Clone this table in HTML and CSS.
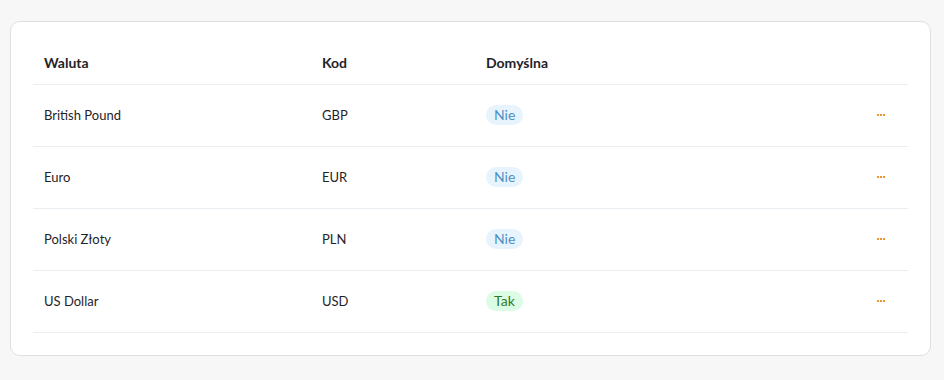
FILE: index.html
```html
<!DOCTYPE html>
<html lang="pl">
<head>
<meta charset="utf-8">
<link rel="stylesheet" href="styles.css">
</head>
<body>
<div class="card">
  <div class="table">
    <div class="row head">
      <div class="cell">Waluta</div>
      <div class="cell">Kod</div>
      <div class="cell">Domyślna</div>
      <div class="cell"></div>
    </div>
    <div class="row">
      <div class="cell">British Pound</div>
      <div class="cell">GBP</div>
      <div class="cell"><span class="pill no">Nie</span></div>
      <div class="cell act"><span class="dots"><i></i><i></i><i></i></span></div>
    </div>
    <div class="row">
      <div class="cell">Euro</div>
      <div class="cell">EUR</div>
      <div class="cell"><span class="pill no">Nie</span></div>
      <div class="cell act"><span class="dots"><i></i><i></i><i></i></span></div>
    </div>
    <div class="row">
      <div class="cell">Polski Złoty</div>
      <div class="cell">PLN</div>
      <div class="cell"><span class="pill no">Nie</span></div>
      <div class="cell act"><span class="dots"><i></i><i></i><i></i></span></div>
    </div>
    <div class="row">
      <div class="cell">US Dollar</div>
      <div class="cell">USD</div>
      <div class="cell"><span class="pill yes">Tak</span></div>
      <div class="cell act"><span class="dots"><i></i><i></i><i></i></span></div>
    </div>
  </div>
</div>
</body>
</html>
```
FILE: styles.css
```css
html, body {
  margin: 0;
  padding: 0;
  background: #f7f7f7;
}
body {
  padding: 21px 13px 0 10px;
  font-family: Lato, "Noto Sans", sans-serif;
  font-size: 13px;
  color: #1f2328;
}
.card {
  background: #fff;
  border: 1px solid #e0e0e0;
  border-radius: 10px;
  padding: 20px 22px 22px;
}
.row {
  display: grid;
  grid-template-columns: 278px 164px 1fr 60px;
  height: 61px;
  border-bottom: 1px solid #e9eef3;
  align-items: center;
}
.row > .cell {
  margin-bottom: 2px;
}
.row.head {
  height: 42px;
  font-weight: 700;
  font-size: 14px;
}
.cell {
  padding-left: 11px;
}
.act {
  display: flex;
  justify-content: flex-end;
  padding-right: 23px;
}
.pill {
  display: inline-block;
  height: 20px;
  line-height: 20px;
  padding: 0 8px;
  border-radius: 10px;
  font-size: 14px;
}
.pill.no {
  background: #e8f4fd;
  color: #4e8fc5;
}
.pill.yes {
  background: #dcfce6;
  color: #2f7a22;
}
.dots {
  display: flex;
  gap: 1px;
  margin-top: 1px;
}
.dots i {
  width: 2px;
  height: 2px;
  background: #ee9430;
}
```
